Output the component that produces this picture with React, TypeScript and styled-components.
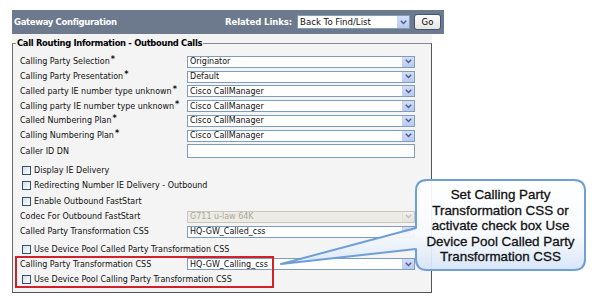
import React from "react";
import styled, { createGlobalStyle } from "styled-components";

const Global = createGlobalStyle`
  html, body { margin: 0; padding: 0; background: #ffffff; }
  body { font-family: "DejaVu Sans", Verdana, sans-serif; }
  * { box-sizing: border-box; }
`;

const Page = styled.div`
  position: relative;
  width: 600px;
  height: 305px;
  overflow: hidden;
  background: #ffffff;
  padding: 10px 0 0 12px;
`;

const HeaderBar = styled.div`
  width: 432px;
  height: 24px;
  background: #6d7a8d;
  display: flex;
  align-items: center;
  justify-content: space-between;
  padding: 0 3px 0 2px;
`;

const HeaderTitle = styled.div`
  color: #ffffff;
  font-weight: bold;
  font-size: 8.5px;
  letter-spacing: -0.35px;
`;

const HeaderRight = styled.div`
  display: flex;
  align-items: center;
  gap: 4px;
`;

const HeaderLabel = styled.span`
  color: #ffffff;
  font-weight: bold;
  font-size: 8.5px;
  letter-spacing: -0.1px;
  margin-right: 1px;
`;

const GoButton = styled.button`
  width: 27px;
  height: 16px;
  padding: 0;
  border: 1px solid #3a5682;
  border-radius: 3px;
  background: linear-gradient(#ffffff, #e6e4dc);
  font-family: "DejaVu Sans", Verdana, sans-serif;
  font-size: 8.5px;
  color: #000;
`;

const Panel = styled.div`
  width: 420px;
  background: #f4f4f4;
  padding-top: 4px;
`;

const Fieldset = styled.fieldset`
  margin: 0;
  padding: 0 0 5px 7px;
  border: 1px solid #8a8a8a;
  border-left-color: #6a6a6a;
  border-right-color: #555;
  border-bottom-color: #555;
  min-width: 0;
`;

const Legend = styled.legend`
  margin-left: -4px;
  padding: 0 1px;
  font-weight: bold;
  font-size: 8.4px;
  letter-spacing: -0.3px;
  line-height: 10px;
  color: #000;
`;

const Rows = styled.div`
  display: flex;
  flex-direction: column;
  padding-top: 6.4px;
`;

const Row = styled.div<{ $h: number; $mt?: number }>`
  height: ${(p) => p.$h}px;
  margin-top: ${(p) => p.$mt ?? 0}px;
  display: grid;
  grid-template-columns: 167px 228px;
  align-items: center;
`;

const Label = styled.span`
  font-size: 8px;
  color: #111;
  white-space: nowrap;
`;

const Star = styled.span`
  font-weight: bold;
  font-size: 8px;
  position: relative;
  top: -2px;
  margin-left: 1px;
`;

const SelectBox = styled.div<{ $w?: number; $h?: number; $disabled?: boolean }>`
  width: ${(p) => p.$w ?? 228}px;
  height: ${(p) => p.$h ?? 12}px;
  border: 1px solid ${(p) => (p.$disabled ? "#c9c7ba" : "#7f9db9")};
  background: ${(p) => (p.$disabled ? "#ecebe6" : "#ffffff")};
  color: ${(p) => (p.$disabled ? "#aca899" : "#111")};
  display: flex;
  align-items: center;
  justify-content: space-between;
  font-size: ${(p) => ((p.$h ?? 12) > 12 ? 8.6 : 8)}px;
  padding-left: 2px;
  white-space: nowrap;
  overflow: hidden;
`;

const ArrowBox = styled.div<{ $disabled?: boolean }>`
  width: 12px;
  height: 100%;
  background: ${(p) =>
    p.$disabled
      ? "linear-gradient(#f2f1ec, #e3e2dc)"
      : "linear-gradient(#d4defb, #b9c9f3)"};
  border-left: 1px solid ${(p) => (p.$disabled ? "#e0dfd8" : "#c4d2f4")};
  display: flex;
  align-items: center;
  justify-content: center;
`;

const TextInput = styled.div`
  width: 228px;
  height: 14px;
  border: 1px solid #7f9db9;
  background: #ffffff;
`;

const CheckRow = styled.div`
  grid-column: 1 / span 2;
  display: flex;
  align-items: center;
  gap: 3px;
  padding-left: 2px;
`;

const CheckBox = styled.span`
  width: 9px;
  height: 9px;
  border: 1px solid #2f4f80;
  background: linear-gradient(135deg, #dcdcd6, #ffffff);
  display: inline-block;
`;

const RedBox = styled.div`
  position: absolute;
  left: 15px;
  top: 256px;
  width: 259px;
  height: 32px;
  border: 2px solid #d3212b;
`;

const CalloutSvg = styled.svg`
  position: absolute;
  left: 278px;
  top: 176px;
`;

const CalloutText = styled.div`
  position: absolute;
  left: 416px;
  top: 187px;
  width: 169px;
  text-align: center;
  font-family: "Liberation Sans", Arial, sans-serif;
  font-size: 13.4px;
  line-height: 15.6px;
  color: #111;
  -webkit-text-stroke: 0.3px #111;
  white-space: nowrap;
`;

const Chevron = ({ disabled }: { disabled?: boolean }) => (
  <svg width="7" height="5" viewBox="0 0 7 5">
    <path
      d="M0.8 0.8 L3.5 3.6 L6.2 0.8"
      fill="none"
      stroke={disabled ? "#c3c2bb" : "#4b5d86"}
      strokeWidth="1.4"
    />
  </svg>
);

const Select = ({
  value,
  disabled,
  w,
  h,
}: {
  value: string;
  disabled?: boolean;
  w?: number;
  h?: number;
}) => (
  <SelectBox $disabled={disabled} $w={w} $h={h}>
    <span>{value}</span>
    <ArrowBox $disabled={disabled}>
      <Chevron disabled={disabled} />
    </ArrowBox>
  </SelectBox>
);

const selects: [string, string, boolean][] = [
  ["Calling Party Selection", "Originator", true],
  ["Calling Party Presentation", "Default", true],
  ["Called party IE number type unknown", "Cisco CallManager", true],
  ["Calling party IE number type unknown", "Cisco CallManager", true],
  ["Called Numbering Plan", "Cisco CallManager", true],
  ["Calling Numbering Plan", "Cisco CallManager", true],
];

export default function App() {
  return (
    <Page>
      <Global />
      <HeaderBar>
        <HeaderTitle>Gateway Configuration</HeaderTitle>
        <HeaderRight>
          <HeaderLabel>Related Links:</HeaderLabel>
          <Select value="Back To Find/List" w={113} h={14} />
          <GoButton>Go</GoButton>
        </HeaderRight>
      </HeaderBar>
      <Panel>
        <Fieldset>
          <Legend>Call Routing Information - Outbound Calls</Legend>
          <Rows>
            {selects.map(([label, value, req]) => (
              <Row $h={14.8} key={label}>
                <Label>
                  {label}
                  {req && <Star>*</Star>}
                </Label>
                <Select value={value} />
              </Row>
            ))}
            <Row $h={16}>
              <Label>Caller ID DN</Label>
              <TextInput />
            </Row>
            <Row $h={16} $mt={3}>
              <CheckRow>
                <CheckBox />
                <Label>Display IE Delivery</Label>
              </CheckRow>
            </Row>
            <Row $h={15.5}>
              <CheckRow>
                <CheckBox />
                <Label>Redirecting Number IE Delivery - Outbound</Label>
              </CheckRow>
            </Row>
            <Row $h={15.5}>
              <CheckRow>
                <CheckBox />
                <Label>Enable Outbound FastStart</Label>
              </CheckRow>
            </Row>
            <Row $h={15}>
              <Label>Codec For Outbound FastStart</Label>
              <Select value="G711 u-law 64K" disabled />
            </Row>
            <Row $h={15}>
              <Label>Called Party Transformation CSS</Label>
              <Select value="HQ-GW_Called_css" />
            </Row>
            <Row $h={16} $mt={2}>
              <CheckRow>
                <CheckBox />
                <Label>Use Device Pool Called Party Transformation CSS</Label>
              </CheckRow>
            </Row>
            <Row $h={14}>
              <Label>Calling Party Transformation CSS</Label>
              <Select value="HQ-GW_Calling_css" />
            </Row>
            <Row $h={16}>
              <CheckRow>
                <CheckBox />
                <Label>Use Device Pool Calling Party Transformation CSS</Label>
              </CheckRow>
            </Row>
          </Rows>
        </Fieldset>
      </Panel>

      <RedBox />

      <CalloutSvg width="312" height="98" viewBox="0 0 312 98">
        <defs>
          <linearGradient id="cg" x1="0" y1="0" x2="0" y2="1">
            <stop offset="0" stopColor="#ffffff" />
            <stop offset="0.6" stopColor="#f7fafe" />
            <stop offset="1" stopColor="#d6e4f7" />
          </linearGradient>
        </defs>
        <path
          d="M138 52 L3 88 L138 73 L138 83 Q138 94 149 94 L296 94 Q307 94 307 83 L307 15 Q307 4 296 4 L149 4 Q138 4 138 15 Z"
          fill="url(#cg)"
          fillOpacity="0.93"
          stroke="#6e9fd6"
          strokeWidth="2"
          strokeLinejoin="round"
        />
      </CalloutSvg>
      <CalloutText>
        Set Calling Party
        <br />
        Transformation CSS or
        <br />
        activate check box Use
        <br />
        Device Pool Called Party
        <br />
        Transformation CSS
      </CalloutText>
    </Page>
  );
}
